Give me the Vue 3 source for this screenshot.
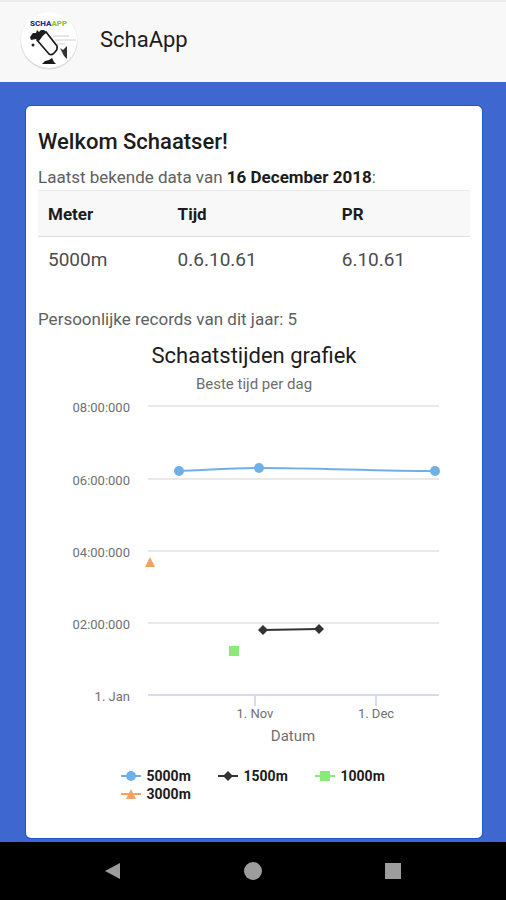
<script setup>
import { ref } from 'vue'

const records = [{ meter: '5000m', time: '0.6.10.61', pr: '6.10.61' }]

const gridLines = [
  { y: 8, label: '08:00:000' },
  { y: 81, label: '06:00:000' },
  { y: 153, label: '04:00:000' },
  { y: 225, label: '02:00:000' },
  { y: 297, label: '1. Jan' },
]

const months = [
  { x: 217, label: '1. Nov' },
  { x: 338, label: '1. Dec' },
]

const series = ref([
  { name: '5000m', color: '#6fb0e8', shape: 'circle', visible: true, points: [[141, 73], [221, 70], [397, 73]], curve: 'M141 73 C168 72 194 70 221 70 C280 70 338 73 397 73' },
  { name: '1500m', color: '#333336', shape: 'diamond', visible: true, points: [[225, 232], [281, 231]], curve: 'M225 232 L281 231' },
  { name: '1000m', color: '#8aea78', shape: 'square', visible: true, points: [[196, 253]], curve: '' },
  { name: '3000m', color: '#f5a25d', shape: 'triangle', visible: true, points: [[112, 164]], curve: '' },
])

const markers = {
  circle: 'M-5 0 a5 5 0 1 0 10 0 a5 5 0 1 0 -10 0 Z',
  diamond: 'M0 -5 L5 0 L0 5 L-5 0 Z',
  square: 'M-5 -5 H5 V5 H-5 Z',
  triangle: 'M0 -5 L5 5 H-5 Z',
}
</script>

<template>
  <div class="app">
    <header class="header">
      <svg class="logo" viewBox="0 0 60 60" role="img" aria-label="SchaApp logo">
        <circle cx="30" cy="31" r="28.5" fill="#dcdcdc" />
        <circle cx="30" cy="30" r="28" fill="#fff" />
        <text x="11" y="16" class="logo-text"><tspan fill="#2c2c86">SCHA</tspan><tspan fill="#95c71e">APP</tspan></text>
        <g stroke="#cfcfcf" stroke-width="1" fill="none">
          <path d="M34 26 H50 M36 30 H57 M38 34 H46" />
        </g>
        <path d="M18 30 L27 22 L38 36 Q39 39 36 42 Q33 46 30 44 Z" fill="#fff" stroke="#171717" stroke-width="1.6" />
        <path d="M11 27 L14 23 L17 23 L18 20 L20 22 L22 20 L25 20 L27 22 L24 24 L23 27 L20 31 L17 29 L12 30 Z" fill="#1d1d1d" />
        <circle cx="14" cy="35" r="1.5" fill="#222" />
        <path d="M41 38 L44 40 L48 36 L48 49 L45 46 Z" fill="#333" />
        <path d="M23 54 L26 51 L30 50 L33 48 L35 52 L37 54 Z" fill="#1b1b1b" />
      </svg>
      <h1 class="title">SchaApp</h1>
    </header>

    <main class="content">
      <section class="card">
        <h2 class="welcome">Welkom Schaatser!</h2>
        <p class="info">Laatst bekende data van <strong>16 December 2018</strong>:</p>
        <table class="times">
          <thead>
            <tr>
              <th scope="col" class="col-meter">Meter</th>
              <th scope="col" class="col-time">Tijd</th>
              <th scope="col">PR</th>
            </tr>
          </thead>
          <tbody>
            <tr v-for="r in records" :key="r.meter">
              <td>{{ r.meter }}</td>
              <td>{{ r.time }}</td>
              <td>{{ r.pr }}</td>
            </tr>
          </tbody>
        </table>
        <p class="info">Persoonlijke records van dit jaar: 5</p>

        <figure class="chart">
          <figcaption>
            <h3 class="chart-title">Schaatstijden grafiek</h3>
            <p class="chart-subtitle">Beste tijd per dag</p>
          </figcaption>
          <svg class="plot" viewBox="0 0 432 352">
            <g v-for="g in gridLines" :key="g.label">
              <line x1="110" x2="401" :y1="g.y" :y2="g.y" :class="g.y === 297 ? 'axis' : 'grid'" />
              <text x="92" :y="g.y + 6" text-anchor="end" class="tick">{{ g.label }}</text>
            </g>
            <g v-for="m in months" :key="m.label">
              <line :x1="m.x" :x2="m.x" y1="297" y2="308" class="axis" />
              <text :x="m.x" y="320" text-anchor="middle" class="tick">{{ m.label }}</text>
            </g>
            <text x="255" y="343" text-anchor="middle" class="axis-title">Datum</text>
            <template v-for="s in series" :key="s.name">
              <g v-if="s.visible">
                <path v-if="s.curve" :d="s.curve" :stroke="s.color" class="curve" />
                <path v-for="p in s.points" :key="p[0]" :d="markers[s.shape]" :fill="s.color" :transform="`translate(${p[0]} ${p[1]})`" />
              </g>
            </template>
          </svg>
          <div class="legend">
            <button
              v-for="s in series"
              :key="s.name"
              type="button"
              class="legend-item"
              :class="{ muted: !s.visible }"
              :aria-pressed="s.visible"
              @click="s.visible = !s.visible"
            >
              <svg width="20" height="12" viewBox="-10 -6 20 12" aria-hidden="true">
                <path d="M-10 0 H10" :stroke="s.color" class="curve" />
                <path :d="markers[s.shape]" :fill="s.color" />
              </svg>
              {{ s.name }}
            </button>
          </div>
        </figure>
      </section>
    </main>

    <nav class="system-bar" aria-label="Systeem">
      <button type="button" aria-label="Terug">
        <svg width="18" height="18" viewBox="0 0 18 18"><path d="M1 9 L16 1 V17 Z" fill="#9d9d9d" /></svg>
      </button>
      <button type="button" aria-label="Start">
        <svg width="18" height="18" viewBox="0 0 18 18"><circle cx="9" cy="9" r="9" fill="#9d9d9d" /></svg>
      </button>
      <button type="button" aria-label="Overzicht">
        <svg width="18" height="18" viewBox="0 0 18 18"><path d="M1 1 H17 V17 H1 Z" fill="#9d9d9d" /></svg>
      </button>
    </nav>
  </div>
</template>

<style>
body {
  margin: 0;
}
</style>

<style scoped>
.app {
  display: flex;
  flex-direction: column;
  min-height: 100vh;
  background: #3e67d0;
  color: #1c1c1c;
  font-family: Roboto, "Liberation Sans", sans-serif;
}
h1, h2, h3, p, figure {
  margin: 0;
}
button {
  padding: 0;
  border: 0;
  background: none;
  color: inherit;
  font: inherit;
  cursor: pointer;
}
.header {
  display: flex;
  align-items: center;
  gap: 21px;
  box-sizing: border-box;
  height: 82px;
  padding: 0 19px 4px;
  background: #f8f8f8;
  border-top: 2px solid #ececec;
}
.logo {
  width: 60px;
  height: 60px;
}
.logo-text {
  font-size: 8px;
  font-weight: 900;
}
.title {
  font-size: 22px;
  line-height: 28px;
  font-weight: 400;
}
.content {
  display: flex;
  flex: 1;
  padding: 24px 24px 4px 26px;
}
.card {
  flex: 1;
  box-sizing: border-box;
  min-width: 0;
  padding: 22px 12px 32px;
  background: #fff;
  border-radius: 5px;
  box-shadow: 0 0 0 1px #1758cc;
}
.welcome {
  margin-bottom: 8px;
  font-size: 22px;
  line-height: 28px;
  font-weight: 500;
}
.info {
  color: #606060;
  font-size: 17px;
  line-height: 26px;
}
.info strong {
  color: #1c1c1c;
  font-weight: 700;
}
.times {
  width: 100%;
  margin-bottom: 23px;
  border-collapse: collapse;
  table-layout: fixed;
  text-align: left;
}
.times th {
  box-sizing: border-box;
  height: 46px;
  padding: 0 10px;
  background: #f8f8f8;
  border-top: 1px solid #e9e9e9;
  border-bottom: 1px solid #dedede;
  font-size: 17px;
  line-height: 20px;
  font-weight: 700;
}
.times td {
  height: 46px;
  padding: 0 10px;
  color: #4c4c4c;
  font-size: 19px;
  line-height: 24px;
}
.col-meter {
  width: 30%;
}
.col-time {
  width: 38%;
}
.chart {
  padding-top: 10px;
}
.chart-title {
  font-size: 22px;
  line-height: 28px;
  font-weight: 400;
  text-align: center;
}
.chart-subtitle {
  color: #6c6c6c;
  font-size: 15px;
  line-height: 28px;
  text-align: center;
}
.plot {
  display: block;
  width: 100%;
}
.grid {
  stroke: #e9e9e9;
  stroke-width: 2;
}
.axis {
  stroke: #d8dbec;
  stroke-width: 2;
}
.tick {
  fill: #707070;
  font-size: 13px;
}
.axis-title {
  fill: #707070;
  font-size: 15px;
}
.curve {
  fill: none;
  stroke-width: 2;
}
.legend {
  display: grid;
  grid-template-columns: repeat(3, 97px);
  justify-content: center;
  padding-top: 17px;
  padding-left: 24px;
}
.legend-item {
  display: flex;
  align-items: center;
  gap: 6px;
  font-size: 14px;
  line-height: 18px;
  font-weight: 700;
}
.legend-item.muted {
  opacity: 0.4;
}
.system-bar {
  display: flex;
  align-items: center;
  justify-content: center;
  gap: 122px;
  height: 58px;
  background: #000;
}
.system-bar svg {
  display: block;
}
</style>
